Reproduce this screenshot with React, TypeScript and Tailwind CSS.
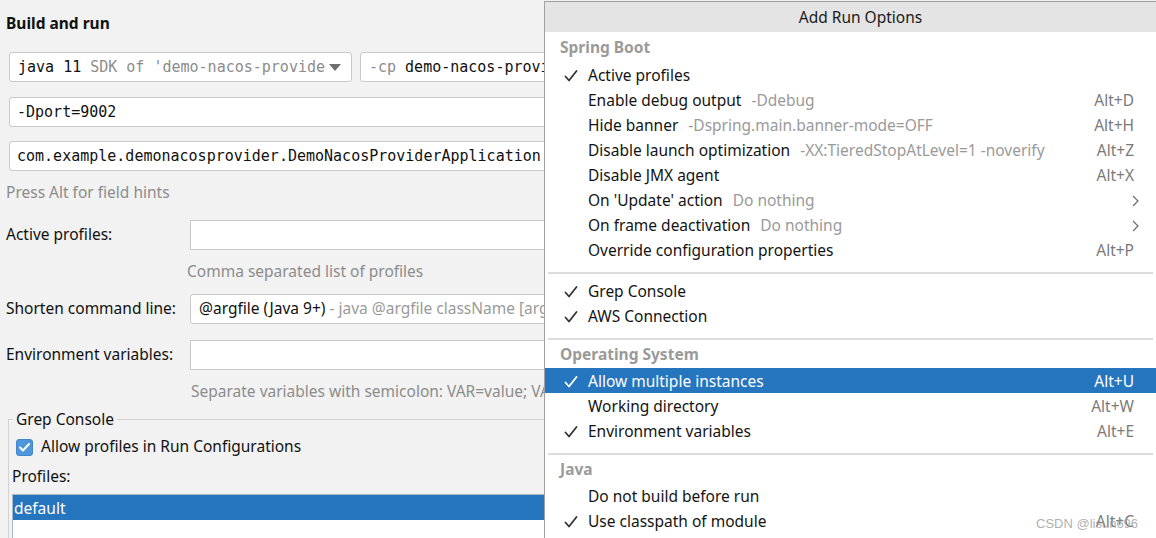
import React from 'react';

type Item = {
  label: string;
  hint?: string;
  shortcut?: string;
  checked?: boolean;
  sub?: boolean;
  selected?: boolean;
};

type Section = {
  title?: string;
  items: Item[];
};

const sections: Section[] = [
  {
    title: 'Spring Boot',
    items: [
      { label: 'Active profiles', checked: true },
      { label: 'Enable debug output', hint: '-Ddebug', shortcut: 'Alt+D' },
      { label: 'Hide banner', hint: '-Dspring.main.banner-mode=OFF', shortcut: 'Alt+H' },
      { label: 'Disable launch optimization', hint: '-XX:TieredStopAtLevel=1 -noverify', shortcut: 'Alt+Z' },
      { label: 'Disable JMX agent', shortcut: 'Alt+X' },
      { label: "On 'Update' action", hint: 'Do nothing', sub: true },
      { label: 'On frame deactivation', hint: 'Do nothing', sub: true },
      { label: 'Override configuration properties', shortcut: 'Alt+P' },
    ],
  },
  {
    items: [
      { label: 'Grep Console', checked: true },
      { label: 'AWS Connection', checked: true },
    ],
  },
  {
    title: 'Operating System',
    items: [
      { label: 'Allow multiple instances', checked: true, shortcut: 'Alt+U', selected: true },
      { label: 'Working directory', shortcut: 'Alt+W' },
      { label: 'Environment variables', checked: true, shortcut: 'Alt+E' },
    ],
  },
  {
    title: 'Java',
    items: [
      { label: 'Do not build before run' },
      { label: 'Use classpath of module', checked: true, shortcut: 'Alt+C' },
    ],
  },
];

const CheckMark = ({ color }: { color: string }) => (
  <svg width="14" height="14" viewBox="0 0 14 14" fill="none">
    <path d="M1.5 7.5 L5 11.5 L12.5 2" stroke={color} strokeWidth="1.8" strokeLinecap="round" strokeLinejoin="round" />
  </svg>
);

const Chevron = () => (
  <svg width="7" height="12" viewBox="0 0 7 12" fill="none">
    <path d="M1 1 L6 6 L1 11" stroke="#6b6b6b" strokeWidth="1.2" />
  </svg>
);

const MenuRow = ({ item }: { item: Item }) => (
  <div
    className={
      item.selected
        ? 'h-[25px] pt-[2px] flex items-center bg-[#2675bf] text-white'
        : 'h-[25px] pt-[2px] flex items-center text-[#141414]'
    }
  >
    <div className="w-[24px] ml-[19px] flex items-center">
      {item.checked && <CheckMark color={item.selected ? '#ffffff' : '#333333'} />}
    </div>
    <span className="whitespace-nowrap">{item.label}</span>
    {item.hint && (
      <span className={item.selected ? 'ml-[10px] whitespace-nowrap' : 'ml-[10px] whitespace-nowrap text-[#9a9a9a]'}>
        {item.hint}
      </span>
    )}
    {item.shortcut && (
      <span className={item.selected ? 'ml-auto mr-[22px]' : 'ml-auto mr-[22px] text-[#7a7a7a]'}>
        {item.shortcut}
      </span>
    )}
    {item.sub && (
      <span className="ml-auto mr-[17px] flex items-center">
        <Chevron />
      </span>
    )}
  </div>
);

const mono = "font-['DejaVu_Sans_Mono',monospace] text-[15px]";

const App: React.FC = () => {
  return (
    <div className="w-[1156px] h-[538px] overflow-hidden flex bg-[#f2f2f2] relative font-['Noto_Sans',sans-serif] text-[15.5px] text-[#111]">
      {/* Left: run configuration form */}
      <div className="w-[544px] shrink-0 h-full overflow-hidden">
        <div className="w-[620px]">
          <div className="h-[46px] pt-[2px] flex items-center pl-[6px] font-bold">Build and run</div>

          <div className="mt-[6px] flex gap-[8px] pl-[9px]">
            <div className={`${mono} w-[343px] h-[30px] bg-white border border-[#c9c9c9] rounded-[3px] flex items-center pl-[8px] pr-[10px]`}>
              <span>java 11</span>
              <span className="ml-[9px] text-[#8c8c8c] whitespace-nowrap">SDK of 'demo-nacos-provide</span>
              <svg className="ml-auto" width="12" height="7" viewBox="0 0 12 7">
                <path d="M0 0 H12 L6 7 Z" fill="#6e6e6e" />
              </svg>
            </div>
            <div className={`${mono} flex-1 h-[30px] bg-white border border-[#c9c9c9] rounded-[3px] flex items-center pl-[8px]`}>
              <span className="text-[#8c8c8c]">-cp</span>
              <span className="ml-[9px] whitespace-nowrap">demo-nacos-provider</span>
            </div>
          </div>

          <div className={`${mono} mt-[15px] ml-[9px] h-[30px] bg-white border border-[#c9c9c9] rounded-[3px] flex items-center pl-[7px]`}>
            -Dport=9002
          </div>

          <div className={`${mono} mt-[14px] ml-[9px] h-[30px] bg-white border border-[#c9c9c9] rounded-[3px] flex items-center pl-[7px]`}>
            com.example.demonacosprovider.DemoNacosProviderApplication
          </div>

          <div className="h-[42px] pt-[2px] flex items-center pl-[6px] text-[#8c8c8c]">Press Alt for field hints</div>

          <div className="mt-[7px] flex items-center">
            <div className="w-[190px] pl-[6px]">Active profiles:</div>
            <div className="flex-1 h-[30px] bg-white border border-[#c9c9c9]" />
          </div>
          <div className="h-[42px] pt-[2px] flex items-center pl-[187px] text-[#8c8c8c]">Comma separated list of profiles</div>

          <div className="mt-[2px] flex items-center">
            <div className="w-[190px] pl-[6px]">Shorten command line:</div>
            <div className="flex-1 h-[30px] bg-white border border-[#c9c9c9] rounded-[3px] flex items-center pl-[8px] whitespace-nowrap">
              <span>@argfile (Java 9+)</span>
              <span className="ml-[4px] text-[#9a9a9a]">- java @argfile className [args]</span>
            </div>
          </div>

          <div className="mt-[16px] flex items-center">
            <div className="w-[190px] pl-[6px]">Environment variables:</div>
            <div className="flex-1 h-[30px] bg-white border border-[#c9c9c9]" />
          </div>
          <div className="h-[42px] pt-[2px] flex items-center pl-[191px] text-[#8c8c8c] whitespace-nowrap">
            Separate variables with semicolon: VAR=value; VAR1=value1
          </div>

          <fieldset className="-mt-[3px] ml-[8px] border border-[#d3d3d3] pl-[3px] pb-[40px]">
            <legend className="ml-[1px] px-[3px] leading-[20px]">Grep Console</legend>
            <div className="mt-[8px] ml-[4px] h-[20px] flex items-center">
              <div className="w-[17px] h-[17px] rounded-[3px] bg-[#4f97dc] border border-[#3f86cc] flex items-center justify-center">
                <svg width="11" height="9" viewBox="0 0 11 9" fill="none">
                  <path d="M1 4.5 L4 7.5 L10 1" stroke="white" strokeWidth="2" strokeLinecap="round" strokeLinejoin="round" />
                </svg>
              </div>
              <span className="ml-[8px]">Allow profiles in Run Configurations</span>
            </div>
            <div className="mt-[10px] h-[20px] flex items-center">Profiles:</div>
            <div className="mt-[7px] border border-[#a9b8c8] bg-white h-[60px]">
              <div className="h-[25px] pt-[2px] bg-[#2675bf] text-white flex items-center pl-[1px]">default</div>
            </div>
          </fieldset>
        </div>
      </div>

      {/* Right: Add Run Options popup */}
      <div className="flex-1 mt-[1px] border-t border-l border-[#a0a0a0] bg-white overflow-hidden">
        <div className="h-[30px] pt-[2px] bg-[#e4e4e4] flex items-center justify-center pl-[20px] text-[#1a1a1a]">Add Run Options</div>
        {sections.map((section, i) => (
          <div key={i}>
            {i > 0 && <div className="mt-[10px] mx-[3px] h-[2px] bg-[#dcdcdc]" />}
            {section.title ? (
              <div
                className={
                  i === 0
                    ? 'h-[30px] pt-[2px] flex items-center pl-[15px] font-bold text-[#9a9a9a]'
                    : 'h-[28px] pt-[2px] flex items-center pl-[15px] font-bold text-[#9a9a9a]'
                }
              >
                {section.title}
              </div>
            ) : (
              <div className="h-[4px]" />
            )}
            {section.items.map((item) => (
              <MenuRow key={item.label} item={item} />
            ))}
          </div>
        ))}
      </div>

      <div className="absolute left-[1036px] top-[514px] text-[13px] text-[#9a9a9a]/80 font-['Liberation_Sans',sans-serif]">
        CSDN @lisun696
      </div>
    </div>
  );
};

export default App;
